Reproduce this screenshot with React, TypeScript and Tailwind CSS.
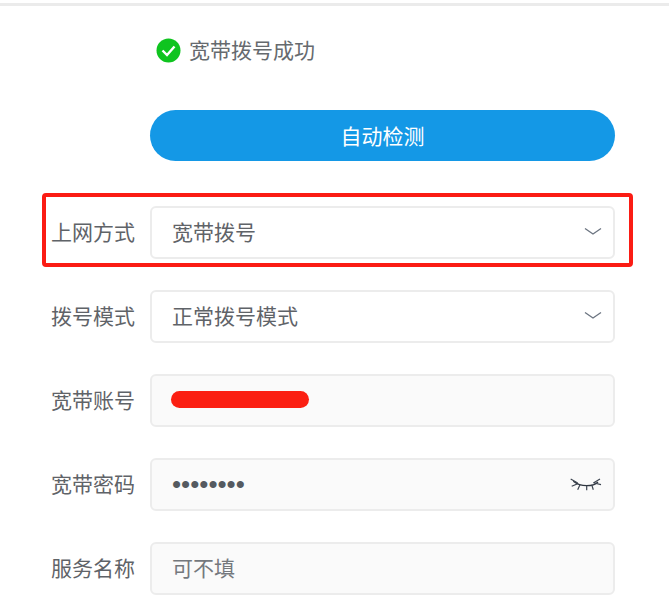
const FONT = "font-['Noto_Sans_CJK_SC',sans-serif]"

function Chevron() {
  return (
    <svg width="18" height="9" viewBox="0 0 18 9" fill="none" className="shrink-0">
      <path d="M1 1.5 L9 7 L17 1.5" stroke="#6b7480" strokeWidth="1.3" />
    </svg>
  )
}

function EyeClosed() {
  return (
    <svg width="33" height="14" viewBox="0 0 33 14" fill="none" className="shrink-0">
      <path d="M4.3 4.3 C9 8 13 8.7 17.7 8.7 C22 8.7 26 8 29 5" stroke="#2f3640" strokeWidth="1.3" />
      <path
        d="M1.7 2 L8.7 6 M2.7 9.3 L8.7 6.7 M11 7.7 L8.7 12.7 M17.7 8.7 L17.7 13.3 M22.7 7.7 L24.3 12.7 M31 2 L24.3 6 M32 7.7 L25.3 6"
        stroke="#3c4450"
        strokeWidth="1.2"
      />
    </svg>
  )
}

function Row({ label, filled, children }: { label: string; filled?: boolean; children: React.ReactNode }) {
  return (
    <div className="flex items-center">
      <span className="w-[150px] shrink-0 pb-[2px] pl-[51px] text-[21px] leading-none text-[#5f6368] whitespace-nowrap">
        {label}
      </span>
      <div
        className={`flex h-[53px] w-[465px] items-center justify-between rounded-md border-2 border-[#ececec] pb-[2px] pl-[20px] pr-[11px] text-[21px] text-[#5f6368] ${
          filled ? 'bg-[#fafafa]' : 'bg-white'
        }`}
      >
        {children}
      </div>
    </div>
  )
}

export default function App() {
  return (
    <div className={`h-[615px] w-[669px] overflow-hidden bg-white ${FONT}`}>
      <div className="mt-[3px] h-[3px] bg-[#ebebeb]" />

      {/* status */}
      <div className="mt-[31px] flex h-[26px] items-center gap-[8px] pl-[156px]">
        <svg width="25" height="25" viewBox="0 0 25 25" className="shrink-0">
          <circle cx="12.5" cy="12.5" r="12" fill="#0fc41f" />
          <path d="M6.5 12.5 L11 17 L18.5 8.5" fill="none" stroke="#fff" strokeWidth="2.4" />
        </svg>
        <span className="pb-[2px] text-[21px] leading-none text-[#666a6e]">宽带拨号成功</span>
      </div>

      {/* detect button */}
      <div className="mt-[47px] pl-[150px]">
        <button className="flex h-[51px] w-[465px] items-center justify-center rounded-full bg-[#1498e6] text-[21px] text-white">
          自动检测
        </button>
      </div>

      <div className="mt-[45px] flex flex-col gap-[31px]">
        <div className="relative">
          <Row label="上网方式">
            <span>宽带拨号</span>
            <Chevron />
          </Row>
          <div className="pointer-events-none absolute left-[42px] top-[-13px] h-[74px] w-[591px] rounded-[4px] border-[4px] border-[#fb1c14]" />
        </div>

        <Row label="拨号模式">
          <span>正常拨号模式</span>
          <Chevron />
        </Row>

        <Row label="宽带账号" filled>
          <span className="-ml-px h-[17px] w-[138px] rounded-full bg-[#fb1f12]" />
        </Row>

        <Row label="宽带密码" filled>
          <span className="font-['Liberation_Sans',sans-serif] text-[26px] leading-none text-[#555a60]">••••••••</span>
          <EyeClosed />
        </Row>

        <Row label="服务名称" filled>
          <span className="text-[#74787d]">可不填</span>
        </Row>
      </div>
    </div>
  )
}
